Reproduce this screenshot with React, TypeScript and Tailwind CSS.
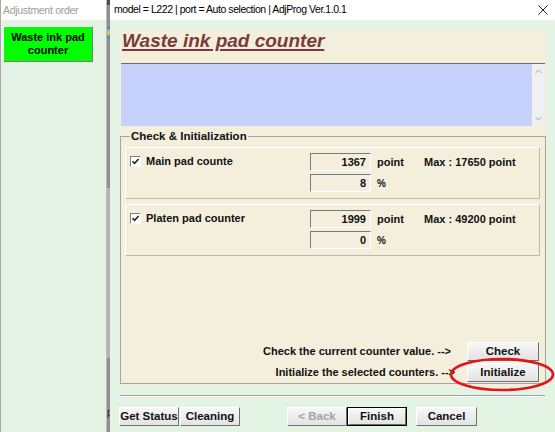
import type { ReactNode } from 'react';

const ui = "font-['Liberation_Sans',Arial,sans-serif]";

function WinButton({ children, w, disabled, isDefault }: { children: ReactNode; w: string; disabled?: boolean; isDefault?: boolean }) {
  const inner = (
    <div
      className={`flex h-full w-full items-center justify-center border border-b-[#6f6f6f] border-l-white border-r-[#6f6f6f] border-t-white bg-gradient-to-b from-[#f7f7f7] to-[#e3e3e3] text-[11.5px] font-bold ${
        disabled ? 'text-[#a3a3a3]' : 'text-[#111]'
      }`}
    >
      {children}
    </div>
  );
  if (isDefault) {
    return <div className={`h-[19px] ${w} border border-black`}>{inner}</div>;
  }
  return <div className={`h-[19px] ${w}`}>{inner}</div>;
}

function ValueBox({ value }: { value: string }) {
  return (
    <div className="flex h-[18px] w-[61px] items-center justify-end border border-b-white border-l-[#7a7a7a] border-r-white border-t-[#7a7a7a] bg-[#f4eedf] pr-[4px] text-[11px] font-bold text-[#111]">
      {value}
    </div>
  );
}

function CheckBox() {
  return (
    <div className="flex h-[11px] w-[11px] items-center justify-center border border-b-white border-l-[#808080] border-r-white border-t-[#808080] bg-white">
      <svg width="9" height="9" viewBox="0 0 9 9">
        <path d="M1.5 4.2 L3.6 6.4 L7.6 2" fill="none" stroke="#222" strokeWidth="1.6" />
      </svg>
    </div>
  );
}

function CounterRow({ label, point, percent, max }: { label: string; point: string; percent: string; max: string }) {
  return (
    <div className="flex h-[52px] border border-b-[#bdb7a9] border-l-white border-r-[#bdb7a9] border-t-white">
      <div className="flex w-[184px] items-start gap-[5px] pl-[4px] pt-[8px]">
        <CheckBox />
        <span className="-mt-[1px] text-[11px] font-bold leading-[13px] text-[#111]">{label}</span>
      </div>
      <div className="flex flex-col gap-[3px] pt-[5px]">
        <div className="flex items-center text-[11px] font-bold text-[#111]">
          <ValueBox value={point} />
          <span className="w-[53px] pl-[6px]">point</span>
          <span>{max}</span>
        </div>
        <div className="flex items-center text-[11px] font-bold text-[#111]">
          <ValueBox value={percent} />
          <span className="pl-[6px] text-[10px]">%</span>
        </div>
      </div>
    </div>
  );
}

export default function App() {
  return (
    <div className={`relative flex h-[432px] w-[555px] overflow-hidden bg-[#e3f2e4] ${ui}`}>
      {/* left wizard step list */}
      <div className="flex w-[106px] flex-col border-l border-[#a9a9a9]">
        <div className="h-[20px] bg-white pl-[2px] text-[10.5px] leading-[20px] tracking-[-0.3px] text-[#9b9b9b]">
          Adjustment order
        </div>
        <div className="flex-1 bg-[#e3f2e4] pl-[2px] pt-[6px]">
          <div className="h-[36px] w-[90px] border border-b-[#7b7b7b] border-l-white border-r-[#7b7b7b] border-t-white bg-[#00ff00] p-[1px]">
            <div className="flex h-full flex-col items-center justify-center text-[11px] font-bold leading-[13px] text-black">
              <span>Waste ink pad</span>
              <span>counter</span>
            </div>
          </div>
        </div>
      </div>

      {/* window edge */}
      <div className="flex w-[4px] flex-col border-l border-[#bdbdbd] bg-[#8f8f8f]">
        <div className="h-[5px] bg-[#4a4a4a]" />
        <div className="mt-[22px] h-[11px] bg-gradient-to-b from-[#2f6fd0] via-[#f2c919] to-[#2f6fd0]" />
        <div className="mt-[150px] h-[170px] bg-[#b3b3b3]" />
        <div className="mt-[50px] text-[10px] leading-[10px] text-[#222]">p</div>
      </div>

      {/* main dialog */}
      <div className="flex w-[445px] flex-col">
        <div className="flex h-[20px] items-center justify-between bg-white pl-[4px] pr-[7px] text-[10.5px] text-black">
          <span className="tracking-[-0.45px]">model = L222 | port = Auto selection | AdjProg Ver.1.0.1</span>
          <svg width="10" height="10" viewBox="0 0 10 10">
            <path d="M0.5 0.5 L9.5 9.5 M9.5 0.5 L0.5 9.5" stroke="#222" strokeWidth="1" />
          </svg>
        </div>

        <div className="flex flex-1 flex-col bg-[#e3f3e4] pl-[10px] pr-[9px] pt-[9px]">
          <div className="flex h-[357px] w-[426px] flex-col bg-[#f4eedd]">
            <div className="h-[34px] pl-[2px]">
              <span className="text-[19px] font-bold italic leading-[24px] text-[#7a3b3b] underline decoration-[2px] underline-offset-[2px]">
                Waste ink pad counter
              </span>
            </div>

            <div className="mx-[1px] flex h-[63px] border-t border-[#6b6b6b] bg-[#c6d1fc]">
              <div className="flex-1" />
              <div className="flex w-[13px] flex-col items-center justify-between bg-[#f0f0f0] py-[5px]">
                <svg width="7" height="5" viewBox="0 0 7 5">
                  <path d="M0.5 4 L3.5 1 L6.5 4" fill="none" stroke="#a6a6a6" strokeWidth="1" />
                </svg>
                <svg width="7" height="5" viewBox="0 0 7 5">
                  <path d="M0.5 1 L3.5 4 L6.5 1" fill="none" stroke="#a6a6a6" strokeWidth="1" />
                </svg>
              </div>
            </div>

            <fieldset className="mt-[4px] border border-[#a9a496] px-[4px]">
              <legend className="ml-[5px] px-[1px] text-[11.5px] font-bold leading-[13px] text-[#111]">Check &amp; Initialization</legend>
              <div className="flex h-[240px] flex-col pb-[1px]">
                <div className="mt-[4px] mr-[1px] flex flex-col gap-[5px]">
                  <CounterRow label="Main pad counte" point="1367" percent="8" max="Max : 17650 point" />
                  <CounterRow label="Platen pad counter" point="1999" percent="0" max="Max : 49200 point" />
                </div>
                <div className="flex-1" />
                <div className="flex flex-col gap-[2px] pr-[2px]">
                  <div className="flex items-center justify-end gap-[16px]">
                    <span className="text-[11px] font-bold text-[#111]">Check the current counter value. --&gt;</span>
                    <WinButton w="w-[72px]">Check</WinButton>
                  </div>
                  <div className="flex items-center justify-end gap-[12px]">
                    <span className="text-[11px] font-bold text-[#111]">Initialize the selected counters. --&gt;</span>
                    <WinButton w="w-[72px]">Initialize</WinButton>
                  </div>
                </div>
              </div>
            </fieldset>
          </div>

          <div className="mt-[9px] h-[2px] w-[425px] border-b border-t border-b-white border-t-[#a0a0a0]" />

          <div className="-ml-[1px] mt-[10px] flex items-center">
            <WinButton w="w-[60px]">Get Status</WinButton>
            <div className="w-[1px]" />
            <WinButton w="w-[60px]">Cleaning</WinButton>
            <div className="w-[47px]" />
            <WinButton w="w-[60px]" disabled>
              &lt; Back
            </WinButton>
            <WinButton w="w-[60px]" isDefault>
              Finish
            </WinButton>
            <div className="w-[9px]" />
            <WinButton w="w-[61px]">Cancel</WinButton>
          </div>
        </div>
      </div>

      {/* red annotation ring */}
      <svg className="pointer-events-none absolute left-[449px] top-[357px]" width="106" height="35" viewBox="0 0 106 35">
        <ellipse cx="53" cy="17.5" rx="51" ry="15.5" fill="none" stroke="#e3141b" strokeWidth="2.6" />
      </svg>
    </div>
  );
}
